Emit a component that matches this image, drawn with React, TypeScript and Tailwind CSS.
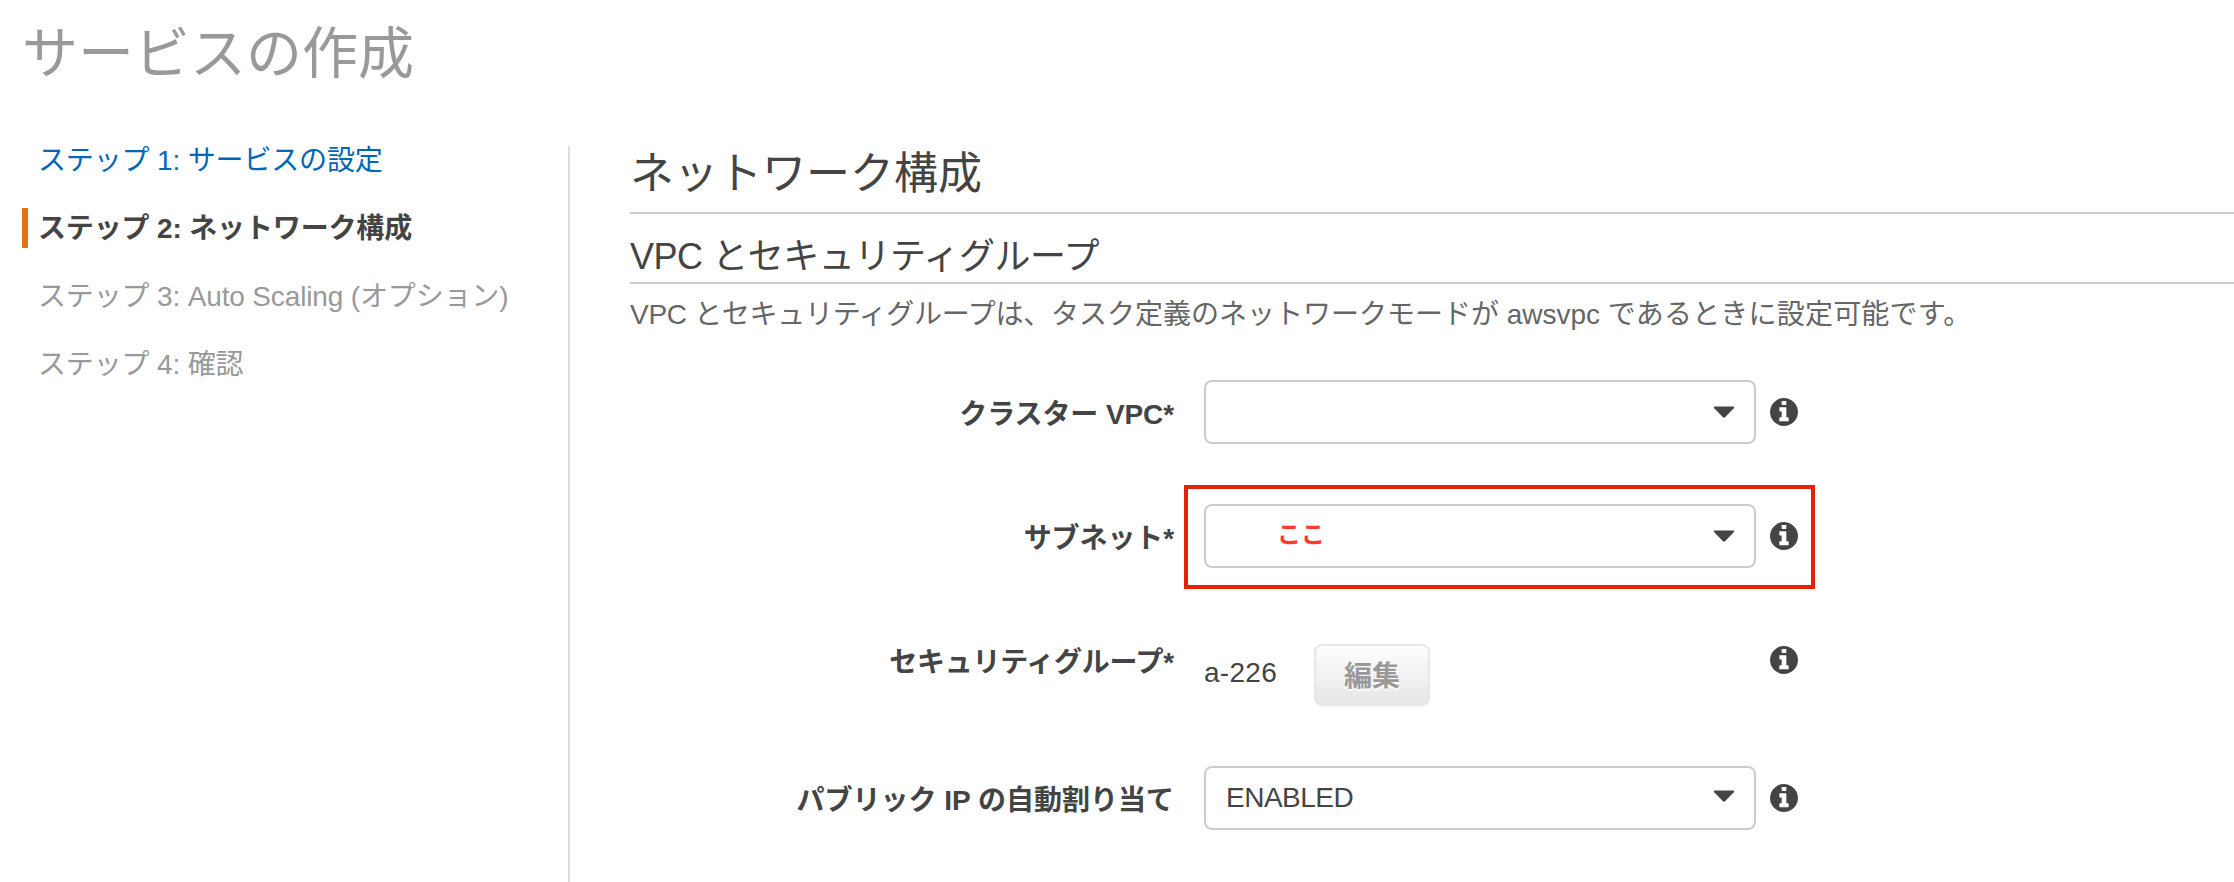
import React from 'react'

const steps = [
  { label: 'ステップ 1: サービスの設定', className: 'text-[#0066b8]' },
  { label: 'ステップ 2: ネットワーク構成', className: 'font-bold text-[#444]' },
  { label: 'ステップ 3: Auto Scaling (オプション)', className: 'text-[#999]' },
  { label: 'ステップ 4: 確認', className: 'text-[#999]' },
]

function InfoIcon() {
  return (
    <svg viewBox="128 128 1536 1536" className="w-7 h-7 shrink-0 fill-[#444]">
      <path d="M1152 1376v-160q0-14-9-23t-23-9h-96v-512q0-14-9-23t-23-9h-320q-14 0-23 9t-9 23v160q0 14 9 23t23 9h96v320h-96q-14 0-23 9t-9 23v160q0 14 9 23t23 9h448q14 0 23-9t9-23zm-128-896v-160q0-14-9-23t-23-9h-192q-14 0-23 9t-9 23v160q0 14 9 23t23 9h192q14 0 23-9t9-23zm640 416q0 209-103 385.5t-279.5 279.5-385.5 103-385.5-103-279.5-279.5-103-385.5 103-385.5 279.5-279.5 385.5-103 385.5 103 279.5 279.5 103 385.5z" />
    </svg>
  )
}

function Select({ children, caret = '' }: { children?: React.ReactNode; caret?: string }) {
  return (
    <div className="w-[552px] h-16 flex items-center justify-between border-2 border-[#ccc] rounded-lg bg-white pl-5 pr-5">
      <div className="text-[#444]">{children}</div>
      <svg viewBox="0 0 20 12" className={`w-5 h-3 fill-[#444] ${caret}`}>
        <path d="M0 0.5h20v1.5L10.8 11.6h-1.6L0 2z" />
      </svg>
    </div>
  )
}

function Field({ label, labelClass = '', children }: { label: string; labelClass?: string; children: React.ReactNode }) {
  return (
    <div className="flex items-start">
      <div className={`w-[544px] mr-[30px] pt-[15px] text-right font-bold text-[#444] ${labelClass}`}>{label}</div>
      <div className="w-[552px]">{children}</div>
      <div className="h-16 ml-[14px] flex items-center">
        <InfoIcon />
      </div>
    </div>
  )
}

export default function App() {
  return (
    <div
      lang="ja"
      className="w-full h-[882px] overflow-hidden bg-white pt-[26px] font-['Liberation_Sans','Noto_Sans_CJK_JP',sans-serif] text-[28px] leading-10 whitespace-nowrap"
    >
      <h1 className="pl-[22px] text-[56px] leading-[56px] text-[#999]">サービスの作成</h1>

      <div className="flex mt-[58px]">
        {/* Steps */}
        <nav className="w-[568px] pl-[22px] flex flex-col gap-7 shrink-0 tracking-[-0.15px]">
          {steps.map((step, i) => (
            <div
              key={step.label}
              className={`h-10 border-l-[6px] pl-[10px] leading-[42px] ${i === 1 ? 'border-[#e07318]' : 'border-transparent'} ${step.className}`}
            >
              {step.label}
            </div>
          ))}
        </nav>

        {/* Network settings */}
        <main className="grow mt-1.5 h-[736px] border-l-2 border-[#ddd] pl-[60px] pt-1.5">
          <h2 className="h-[62px] border-b-2 border-[#ccc] text-[44px] leading-[44px] text-[#444]">
            ネットワーク構成
          </h2>
          <h3 className="h-[70px] pt-[25px] border-b-2 border-[#ccc] text-[36px] leading-9 tracking-[-0.45px] text-[#444]">
            VPC とセキュリティグループ
          </h3>
          <p className="mt-[11px] text-[#666]">
            <span className="tracking-[-0.3px]">VPC とセキュリティグループは、</span>
            タスク定義のネットワークモードが awsvpc <span className="tracking-[0.2px]">であるときに設定可能です。</span>
          </p>

          <div className="mt-[45px] flex flex-col gap-[60px]">
            <Field label="クラスター VPC*" labelClass="tracking-[-0.1px]">
              <Select />
            </Field>

            <div className="relative">
              <Field label="サブネット*" labelClass="tracking-[-0.1px]">
                <Select>
                  <span className="block pl-[51px] pb-0.5 text-2xl leading-10 font-bold text-[#ff3b30]">ここ</span>
                </Select>
              </Field>
              <div className="absolute left-[554px] -top-[19px] w-[631px] h-[104px] border-4 border-[#e52207]" />
            </div>

            <Field label="セキュリティグループ*" labelClass="tracking-[-0.25px]">
              <div className="h-[78px] pt-4 flex items-start text-[#444]">
                <span className="w-[110px] pt-[9px] tracking-[0.3px]">a-226</span>
                <button className="w-[116px] h-[62px] pt-[3px] border-2 border-[#e7e7e7] rounded-lg bg-linear-to-b from-[#fefefe] to-[#e6e6e6] font-bold text-[#999] text-shadow-[0_2px_2px_#fff]">
                  編集
                </button>
              </div>
            </Field>

            <Field label="パブリック IP の自動割り当て">
              <Select caret="mb-1">
                <span className="block tracking-[-0.5px]">ENABLED</span>
              </Select>
            </Field>
          </div>
        </main>
      </div>
    </div>
  )
}
